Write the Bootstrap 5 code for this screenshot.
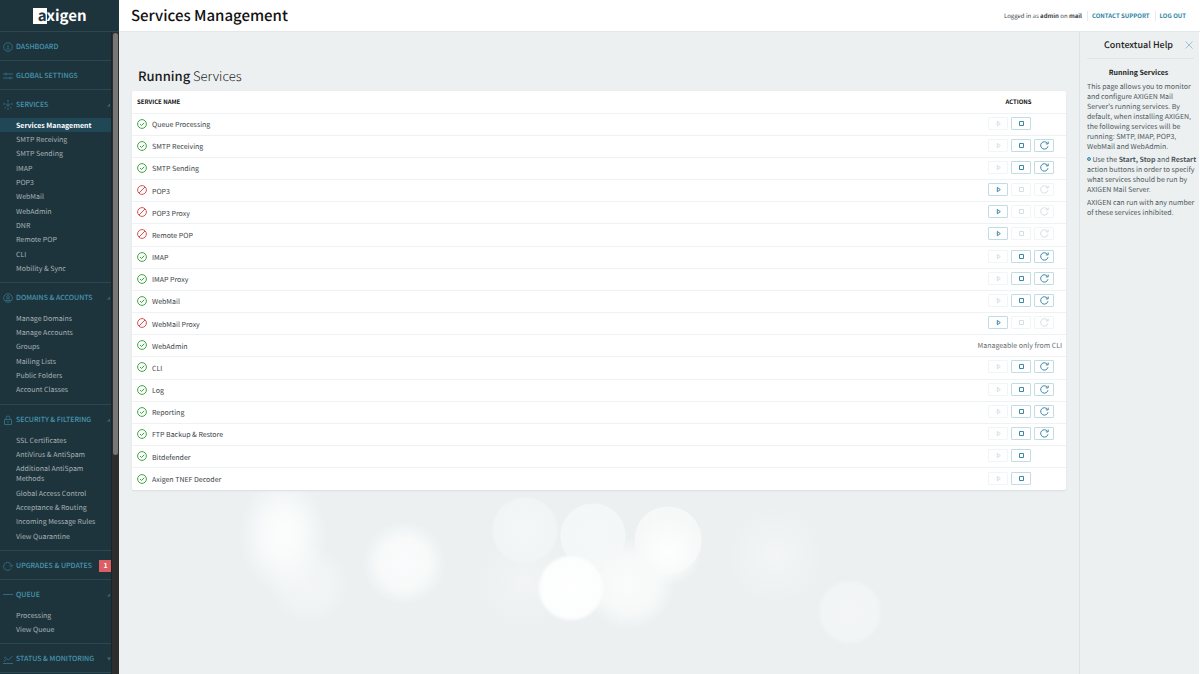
<!DOCTYPE html>
<html lang="en">
<head>
<meta charset="utf-8">
<meta name="viewport" content="width=device-width, initial-scale=1">
<title>Services Management</title>
<link href="https://cdn.jsdelivr.net/npm/bootstrap@5.3.0/dist/css/bootstrap.min.css" rel="stylesheet">
<style>
  body { font-family: "Noto Sans CJK SC", "Source Sans Pro", sans-serif; font-size: 7px; line-height: 10px; color: #3c4548; background: #fff; text-rendering: geometricPrecision; }
  a { text-decoration: none; }
  svg { display: block; fill: none; stroke: currentColor; }

  /* Sidebar */
  .side { width: 119px; height: 100vh; background: #1e343c; }
  .brand { height: 32px; border-bottom: 1px solid #2b4752; }
  .brand-box { width: 14px; height: 16px; background: #fff; color: #1e343c; display: flex; justify-content: flex-end; }
  .brand-text { font: 700 15px/15px "Noto Sans CJK SC", sans-serif; color: #fff; }
  .side-body { min-height: 0; }
  .side-menu { overflow: hidden; }
  .side-track { width: 8px; background: #2d2d2d; border-left: 1px solid #1b2629; padding: 1px; }
  .side-thumb { height: 66%; background: #777; border-radius: 3px; }
  .side-sec { border-bottom: 1px solid #2b4752; }
  .side-head { height: 28px; padding: 1px 0 0 3px; gap: 3px; font-weight: 500; color: #4796b2; }
  .side-head svg { width: 10px; height: 10px; color: #31687c; stroke-width: 1; flex: none; }
  .side-head .side-arrow { width: 4px; height: 4px; fill: #3f6675; stroke: none; }
  .side-sec ul { padding-bottom: 7px; }
  .side-sec li:nth-child(3n) { margin-bottom: 1px; }
  .side-sec li a { display: block; padding: 3px 10px 1px 16px; color: #a5b1b4; }
  .side-sec li a.active { background: #204755; color: #fff; font-weight: 700; }
  .side-count { width: 12px; height: 12px; line-height: 12px; background: #dd5f64; color: #fff; }

  /* Top bar */
  .topbar { height: 32px; padding: 0 14px 0 12px; border-bottom: 1px solid #e2e8ea; font-size: 6px; }
  .topbar h1 { font-size: 15px; line-height: 20px; font-weight: 500; color: #111; }
  .topbar a { color: #2c86a5; font-weight: 700; }
  .topbar .split { padding-left: 4px; margin-left: 5px; border-left: 1px solid #e3ebee; }

  /* Content */
  .stage {
    background-color: #ecf0f1;
    background-image:
      radial-gradient(circle 34px at 452px 556px, #fff 0, #fcfdfd 30px, transparent 34px),
      radial-gradient(circle 34px at 549px 520px, #fdfefe 0, #fafcfc 16px, transparent 34px),
      radial-gradient(circle 34px at 549px 508px, #f8fafa 0, #f6f8f8 33px, transparent 34px),
      radial-gradient(circle 46px at 510px 552px, #fafbfb 0, #f7f9f9 28px, transparent 46px),
      radial-gradient(circle 33px at 474px 504px, #f5f8f8 0, #f4f7f7 32px, transparent 33px),
      radial-gradient(circle 34px at 406px 498px, #f4f7f8 0, #f2f5f6 31px, transparent 34px),
      radial-gradient(circle 42px at 285px 531px, #fafbfc 0, #f8fafa 24px, transparent 42px),
      radial-gradient(ellipse 44px 60px at 164px 503px, #fcfdfd 0, #f9fbfb 40%, transparent 100%),
      radial-gradient(circle 40px at 190px 552px, #f3f5f6 0, #f1f4f4 24px, transparent 40px),
      radial-gradient(circle 50px at 405px 550px, #f2f4f5 0, transparent 50px),
      radial-gradient(circle 33px at 731px 580px, #f3f5f6 0, #f2f5f5 28px, transparent 33px),
      radial-gradient(circle 50px at 656px 524px, #f3f5f7 0, #f0f3f4 24px, transparent 50px);
    background-repeat: no-repeat;
  }
  .work { padding: 35px 13px 0; }
  .work h2 { font-size: 13px; line-height: 18px; margin: 0 0 6px 6px; color: #1a1a1a; font-weight: 300; }
  .work h2 strong { font-weight: 500; }
  .panel { background: #fff; border-radius: 2px; box-shadow: 0 1px 2px #d9dfe1; }
  .svc { height: 399px; }
  .svc tr { height: 22px; }
  .svc th, .svc td { padding: 0; border-bottom: 1px solid #eef2f3; vertical-align: middle; background: transparent; }
  .svc tbody tr:last-child td { border-bottom: 0; }
  .svc th { color: #111; font-weight: 700; font-size: 6px; }
  .svc th:first-child { padding-left: 5px; }
  .svc th:last-child { width: 95px; text-align: center; }
  .svc td { color: #3c4548; }
  .svc-name { padding: 2px 0 0 5px; gap: 5px; }
  .svc-name svg { width: 10px; height: 10px; stroke-width: 1; margin-bottom: 3px; }
  .svc-note { color: #666e71; }
  .ok { color: #3da63f; }
  .off { color: #d9534f; }
  .acts { gap: 3px; padding: 0 0 2px 17px; }
  .acts button { width: 20px; height: 13px; padding: 0; background: #fff; border: 1px solid #c2dce4; border-radius: 1px; color: #3d88a1; display: flex; align-items: center; justify-content: center; }
  .acts button:disabled { border-color: #f0f5f6; color: #d3dfe3; }
  .acts svg { width: 9px; height: 9px; stroke-width: 1; }

  /* Help */
  .help { width: 121px; border-left: 1px solid #dde3e5; border-right: 1px solid #fff; padding: 0 1px 0 7px; color: #4f595d; }
  .help-top { height: 27px; margin-right: 4px; border-bottom: 1px solid #e0e6e8; }
  .help-top h2 { font-size: 9px; line-height: 12px; padding-left: 6px; color: #222; font-weight: 500; }
  .help-close { width: 10px; height: 10px; padding: 0; border: 0; background: none; color: #9cc3d0; }
  .help h3 { font-size: 7px; line-height: 10px; font-weight: 700; color: #222; margin: 9px 8px 4px 0; }
  .help p { margin: 0 0 3px; }
  .help-dot { display: inline-block; width: 4px; height: 4px; border: 1px solid #3790ad; border-radius: 50%; background: #8cc0d0; vertical-align: 1px; }
</style>
</head>
<body>
<svg width="0" height="0" class="position-absolute" aria-hidden="true">
  <symbol id="i-ok" viewBox="0 0 10 10"><circle cx="5" cy="5" r="4.4"/><path d="M3 5l1.5 1.5L7.2 3.8"/></symbol>
  <symbol id="i-off" viewBox="0 0 10 10"><circle cx="5" cy="5" r="4.4"/><path d="M2 8l6-6"/></symbol>
  <symbol id="i-play" viewBox="0 0 9 9"><path d="M3.3 2.4v4.4L6.3 4.6z"/></symbol>
  <symbol id="i-stop" viewBox="0 0 9 9"><path d="M2.5 2.5h4v4h-4z"/></symbol>
  <symbol id="i-again" viewBox="0 0 9 9"><path d="M8 5.2A3.7 3.7 0 1 1 7.4 2.3M8.2.6v2.3H5.8"/></symbol>
  <symbol id="i-up" viewBox="0 0 4 4"><path d="M0 3.5L3 .5v3z"/></symbol>
  <symbol id="i-down" viewBox="0 0 4 4"><path d="M0 .5h4L2 3.5z"/></symbol>
</svg>

<div class="d-flex">
  <nav class="side d-flex flex-column flex-shrink-0 sticky-top" aria-label="Main">
    <a href="#" class="brand d-flex align-items-center justify-content-center flex-shrink-0">
      <span class="brand-text d-flex"><span class="brand-box">a</span>xigen</span>
    </a>
    <div class="side-body d-flex flex-grow-1">
      <div class="side-menu flex-grow-1">
        <div class="side-sec">
          <a href="#" class="side-head d-flex align-items-center"><svg viewBox="0 0 10 10"><circle cx="5" cy="5" r="4.3"/><path d="M5 6V3M3.4 7h3.2"/></svg>DASHBOARD</a>
        </div>
        <div class="side-sec">
          <a href="#" class="side-head d-flex align-items-center"><svg viewBox="0 0 10 10"><path d="M0 3h10M0 7h10M3 1.6v2.8M7 5.6v2.8"/></svg>GLOBAL SETTINGS</a>
        </div>
        <div class="side-sec">
          <a href="#" class="side-head d-flex align-items-center"><svg viewBox="0 0 10 10"><circle cx="5" cy="5" r="1.2"/><path d="M5 0v2M5 8v2M0 4h2.500M10 4H7.500M1.5 8.5L3 7M8.500 8.500L7 7"/></svg>SERVICES<svg class="side-arrow ms-auto"><use href="#i-up"/></svg></a>
          <ul class="list-unstyled mb-0">
            <li><a href="#" class="active">Services Management</a></li>
            <li><a href="#">SMTP Receiving</a></li>
            <li><a href="#">SMTP Sending</a></li>
            <li><a href="#">IMAP</a></li>
            <li><a href="#">POP3</a></li>
            <li><a href="#">WebMail</a></li>
            <li><a href="#">WebAdmin</a></li>
            <li><a href="#">DNR</a></li>
            <li><a href="#">Remote POP</a></li>
            <li><a href="#">CLI</a></li>
            <li><a href="#">Mobility &amp; Sync</a></li>
          </ul>
        </div>
        <div class="side-sec">
          <a href="#" class="side-head d-flex align-items-center"><svg viewBox="0 0 10 10"><circle cx="5" cy="5" r="4.3"/><circle cx="5" cy="3.900" r="1.3"/><path d="M3 7.500c0-2.500 4-2.500 4 0z"/></svg>DOMAINS &amp; ACCOUNTS<svg class="side-arrow ms-auto"><use href="#i-up"/></svg></a>
          <ul class="list-unstyled mb-0">
            <li><a href="#">Manage Domains</a></li>
            <li><a href="#">Manage Accounts</a></li>
            <li><a href="#">Groups</a></li>
            <li><a href="#">Mailing Lists</a></li>
            <li><a href="#">Public Folders</a></li>
            <li><a href="#">Account Classes</a></li>
          </ul>
        </div>
        <div class="side-sec">
          <a href="#" class="side-head d-flex align-items-center"><svg viewBox="0 0 10 10"><path d="M1.500 4.500h7v5h-7zM3 4.500V3a2 2 0 0 1 4 0v1.500M5 6v2"/></svg>SECURITY &amp; FILTERING<svg class="side-arrow ms-auto"><use href="#i-up"/></svg></a>
          <ul class="list-unstyled mb-0">
            <li><a href="#">SSL Certificates</a></li>
            <li><a href="#">AntiVirus &amp; AntiSpam</a></li>
            <li><a href="#">Additional AntiSpam Methods</a></li>
            <li><a href="#">Global Access Control</a></li>
            <li><a href="#">Acceptance &amp; Routing</a></li>
            <li><a href="#">Incoming Message Rules</a></li>
            <li><a href="#">View Quarantine</a></li>
          </ul>
        </div>
        <div class="side-sec">
          <a href="#" class="side-head d-flex align-items-center"><svg viewBox="0 0 10 10"><path d="M8 7.500A4 4 0 1 1 8.500 4.500M6.500 4.300l2 1.500L10 4"/></svg>UPGRADES &amp; UPDATES<span class="side-count text-center fw-bold ms-auto">1</span></a>
        </div>
        <div class="side-sec">
          <a href="#" class="side-head d-flex align-items-center"><svg viewBox="0 0 10 10"><path d="M0 4.500h10"/></svg>QUEUE<svg class="side-arrow ms-auto"><use href="#i-up"/></svg></a>
          <ul class="list-unstyled mb-0">
            <li><a href="#">Processing</a></li>
            <li><a href="#">View Queue</a></li>
          </ul>
        </div>
        <div class="side-sec">
          <a href="#" class="side-head d-flex align-items-center"><svg viewBox="0 0 10 10"><path d="M0 9.500h10M1 7.500l2.500-3 2 1.500L9.500 2M1 4l2-1"/></svg>STATUS &amp; MONITORING<svg class="side-arrow ms-auto"><use href="#i-down"/></svg></a>
        </div>
      </div>
      <div class="side-track"><div class="side-thumb"></div></div>
    </div>
  </nav>

  <div class="flex-grow-1 d-flex flex-column min-vh-100">
    <header class="topbar d-flex align-items-center">
      <h1 class="mb-0 me-auto">Services Management</h1>
      <span>Logged in as <strong>admin</strong> on <strong>mail</strong></span>
      <a href="#" class="split">CONTACT SUPPORT</a>
      <a href="#" class="split">LOG OUT</a>
    </header>
    <div class="stage d-flex flex-grow-1">
      <main class="work flex-grow-1">
        <h2><strong>Running</strong> Services</h2>
        <div class="panel">
          <table class="table svc mb-0">
            <thead><tr><th>SERVICE NAME</th><th>ACTIONS</th></tr></thead>
            <tbody id="services"></tbody>
          </table>
        </div>
      </main>
      <aside class="help flex-shrink-0">
        <div class="help-top d-flex align-items-center">
          <h2 class="mb-0 flex-grow-1 text-center">Contextual Help</h2>
          <button type="button" class="help-close" aria-label="Close help"><svg viewBox="0 0 10 10"><path d="M1.500 1.500l7 7M8.500 1.500l-7 7"/></svg></button>
        </div>
        <h3 class="text-center">Running Services</h3>
        <p>This page allows you to monitor and configure AXIGEN Mail Server's running services. By default, when installing AXIGEN, the following services will be running: SMTP, IMAP, POP3, WebMail and WebAdmin.</p>
        <p><span class="help-dot"></span> Use the <strong>Start, Stop</strong> and <strong>Restart</strong> action buttons in order to specify what services should be run by AXIGEN Mail Server.</p>
        <p>AXIGEN can run with any number of these services inhibited.</p>
      </aside>
    </div>
  </div>
</div>

<script src="https://cdn.jsdelivr.net/npm/bootstrap@5.3.0/dist/js/bootstrap.bundle.min.js"></script>
<script>
  // name, running, can be restarted
  const services = [
    ['Queue Processing', true, false], ['SMTP Receiving', true, true], ['SMTP Sending', true, true],
    ['POP3', false, true], ['POP3 Proxy', false, true], ['Remote POP', false, true],
    ['IMAP', true, true], ['IMAP Proxy', true, true], ['WebMail', true, true],
    ['WebMail Proxy', false, true], ['WebAdmin', true, null], ['CLI', true, true],
    ['Log', true, true], ['Reporting', true, true], ['FTP Backup &amp; Restore', true, true],
    ['Bitdefender', true, false], ['Axigen TNEF Decoder', true, false]
  ];
  const button = (label, icon, enabled) =>
    `<button type="button" aria-label="${label}" ${enabled ? '' : 'disabled'}><svg><use href="#${icon}"/></svg></button>`;
  document.getElementById('services').innerHTML = services.map(([name, on, restart]) => {
    const actions = restart === null
      ? '<div class="svc-note text-end text-nowrap pe-1">Manageable only from CLI</div>'
      : `<div class="acts d-flex">${button('Start', 'i-play', !on)}${button('Stop', 'i-stop', on)}${restart ? button('Restart', 'i-again', on) : ''}</div>`;
    return `<tr><td><div class="svc-name d-flex align-items-center"><svg class="${on ? 'ok' : 'off'}"><use href="#${on ? 'i-ok' : 'i-off'}"/></svg>${name}</div></td><td>${actions}</td></tr>`;
  }).join('');
</script>
</body>
</html>
